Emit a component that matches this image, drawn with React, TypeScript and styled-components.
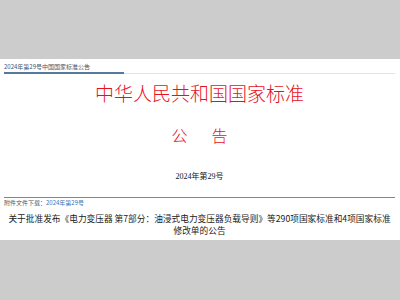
import React from "react";
import styled, { createGlobalStyle } from "styled-components";

const Global = createGlobalStyle`
  html, body { margin: 0; padding: 0; background: #cccccc; }
  body { width: 400px; height: 300px; overflow: hidden; font-family: "Noto Sans CJK SC", "Noto Sans", sans-serif; }
`;

const Page = styled.div`
  padding-top: 59px;
`;

const Panel = styled.div`
  background: #ffffff;
  height: 181px;
  padding: 0 5px 0 4px;
  display: flex;
  flex-direction: column;
`;

const Crumb = styled.div`
  border-bottom: 1px solid #e4e4e4;
  padding-top: 2px;
  display: flex;
`;

const CrumbTab = styled.div`
  width: 120px;
  font-size: 6px;
  line-height: 11px;
  color: #3d5670;
  border-bottom: 2px solid #56789a;
  margin-bottom: -1px;
  white-space: nowrap;
`;

const Title = styled.h1`
  margin: 7px 0 0;
  font-size: 19px;
  line-height: 24px;
  font-weight: 300;
  color: #e8101e;
  text-align: center;
`;

const Notice = styled.div`
  margin-top: 20px;
  display: flex;
  justify-content: center;
  gap: 24px;
  font-size: 16px;
  line-height: 20px;
  font-weight: 300;
  color: #e8101e;
`;

const Number = styled.div`
  margin-top: 27px;
  text-align: center;
  font-family: "Liberation Serif", "Noto Sans CJK SC", serif;
  font-size: 8px;
  line-height: 10px;
  color: #111;
`;

const Attach = styled.div`
  margin-top: 15px;
  border-top: 1px solid #e85a62;
  font-size: 6px;
  line-height: 9px;
  color: #555;
`;

const Link = styled.a`
  color: #3a72b5;
  text-decoration: none;
`;

const Heading = styled.h2`
  margin: 6px 0 0;
  font-size: 8.7px;
  line-height: 12px;
  font-weight: 400;
  color: #222;
  text-align: center;
`;

export default function App() {
  return (
    <Page>
      <Global />
      <Panel>
        <Crumb>
          <CrumbTab>2024年第29号中国国家标准公告</CrumbTab>
        </Crumb>
        <Title>中华人民共和国国家标准</Title>
        <Notice>
          <span>公</span>
          <span>告</span>
        </Notice>
        <Number>2024年第29号</Number>
        <Attach>
          附件文件下载：<Link href="#">2024年第29号</Link>
        </Attach>
        <Heading>
          关于批准发布《电力变压器 第7部分：油浸式电力变压器负载导则》等290项国家标准和4项国家标准
          <br />
          修改单的公告
        </Heading>
      </Panel>
    </Page>
  );
}
